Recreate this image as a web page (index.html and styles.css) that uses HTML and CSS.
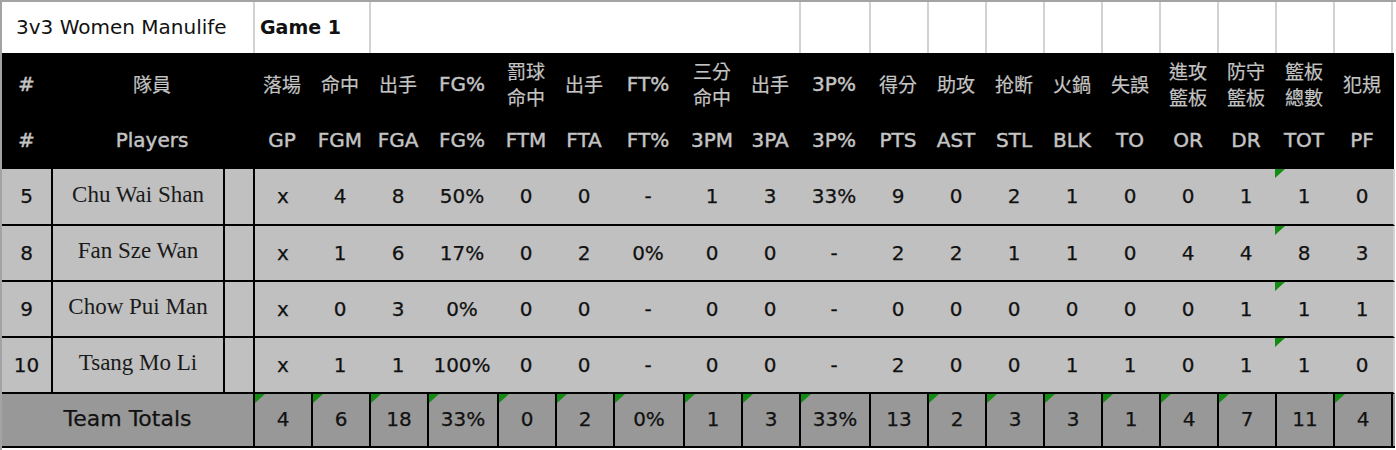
FILE: index.html
```html
<!DOCTYPE html>
<html lang="zh-Hant">
<head>
<meta charset="utf-8">
<title>3v3 Women Manulife</title>
<link rel="stylesheet" href="styles.css">
</head>
<body>
<div class="sheet">
  <div class="row title">
    <div class="cell t-name">3v3 Women Manulife</div>
    <div class="cell t-game">Game 1</div>
    <div class="cell t-blank"></div>
    <div class="cell t-col"></div>
    <div class="cell t-col"></div>
    <div class="cell t-col"></div>
    <div class="cell t-col"></div>
    <div class="cell t-col"></div>
    <div class="cell t-col"></div>
    <div class="cell t-col"></div>
    <div class="cell t-col"></div>
    <div class="cell t-col"></div>
    <div class="cell t-col t-last"></div>
  </div>

  <div class="row head head1">
    <div class="cell">#</div>
    <div class="cell span2 cjk">隊員</div>
    <div class="cell cjk">落場</div>
    <div class="cell cjk">命中</div>
    <div class="cell cjk">出手</div>
    <div class="cell">FG%</div>
    <div class="cell cjk">罰球<br>命中</div>
    <div class="cell cjk">出手</div>
    <div class="cell">FT%</div>
    <div class="cell cjk">三分<br>命中</div>
    <div class="cell cjk">出手</div>
    <div class="cell">3P%</div>
    <div class="cell cjk">得分</div>
    <div class="cell cjk">助攻</div>
    <div class="cell cjk">抢断</div>
    <div class="cell cjk">火鍋</div>
    <div class="cell cjk">失誤</div>
    <div class="cell cjk">進攻<br>籃板</div>
    <div class="cell cjk">防守<br>籃板</div>
    <div class="cell cjk">籃板<br>總數</div>
    <div class="cell cjk">犯規</div>
  </div>

  <div class="row head head2">
    <div class="cell">#</div>
    <div class="cell span2">Players</div>
    <div class="cell">GP</div>
    <div class="cell">FGM</div>
    <div class="cell">FGA</div>
    <div class="cell">FG%</div>
    <div class="cell">FTM</div>
    <div class="cell">FTA</div>
    <div class="cell">FT%</div>
    <div class="cell">3PM</div>
    <div class="cell">3PA</div>
    <div class="cell">3P%</div>
    <div class="cell">PTS</div>
    <div class="cell">AST</div>
    <div class="cell">STL</div>
    <div class="cell">BLK</div>
    <div class="cell">TO</div>
    <div class="cell">OR</div>
    <div class="cell">DR</div>
    <div class="cell">TOT</div>
    <div class="cell">PF</div>
  </div>

  <div class="row data first">
    <div class="cell">5</div>
    <div class="cell name">Chu Wai Shan</div>
    <div class="cell gap"></div>
    <div class="cell gp">x</div>
    <div class="cell">4</div><div class="cell">8</div><div class="cell">50%</div>
    <div class="cell">0</div><div class="cell">0</div><div class="cell">-</div>
    <div class="cell">1</div><div class="cell">3</div><div class="cell">33%</div>
    <div class="cell">9</div><div class="cell">0</div><div class="cell">2</div><div class="cell">1</div><div class="cell">0</div>
    <div class="cell">0</div><div class="cell">1</div><div class="cell flag">1</div><div class="cell">0</div>
  </div>

  <div class="row data">
    <div class="cell">8</div>
    <div class="cell name">Fan Sze Wan</div>
    <div class="cell gap"></div>
    <div class="cell gp">x</div>
    <div class="cell">1</div><div class="cell">6</div><div class="cell">17%</div>
    <div class="cell">0</div><div class="cell">2</div><div class="cell">0%</div>
    <div class="cell">0</div><div class="cell">0</div><div class="cell">-</div>
    <div class="cell">2</div><div class="cell">2</div><div class="cell">1</div><div class="cell">1</div><div class="cell">0</div>
    <div class="cell">4</div><div class="cell">4</div><div class="cell flag">8</div><div class="cell">3</div>
  </div>

  <div class="row data">
    <div class="cell">9</div>
    <div class="cell name">Chow Pui Man</div>
    <div class="cell gap"></div>
    <div class="cell gp">x</div>
    <div class="cell">0</div><div class="cell">3</div><div class="cell">0%</div>
    <div class="cell">0</div><div class="cell">0</div><div class="cell">-</div>
    <div class="cell">0</div><div class="cell">0</div><div class="cell">-</div>
    <div class="cell">0</div><div class="cell">0</div><div class="cell">0</div><div class="cell">0</div><div class="cell">0</div>
    <div class="cell">0</div><div class="cell">1</div><div class="cell flag">1</div><div class="cell">1</div>
  </div>

  <div class="row data">
    <div class="cell">10</div>
    <div class="cell name">Tsang Mo Li</div>
    <div class="cell gap"></div>
    <div class="cell gp">x</div>
    <div class="cell">1</div><div class="cell">1</div><div class="cell">100%</div>
    <div class="cell">0</div><div class="cell">0</div><div class="cell">-</div>
    <div class="cell">0</div><div class="cell">0</div><div class="cell">-</div>
    <div class="cell">2</div><div class="cell">0</div><div class="cell">0</div><div class="cell">1</div><div class="cell">1</div>
    <div class="cell">0</div><div class="cell">1</div><div class="cell flag">1</div><div class="cell">0</div>
  </div>

  <div class="row totals">
    <div class="cell team">Team Totals</div>
    <div class="cell flag">4</div>
    <div class="cell flag">6</div>
    <div class="cell flag">18</div>
    <div class="cell flag">33%</div>
    <div class="cell flag">0</div>
    <div class="cell flag">2</div>
    <div class="cell flag">0%</div>
    <div class="cell flag">1</div>
    <div class="cell flag">3</div>
    <div class="cell flag">33%</div>
    <div class="cell">13</div>
    <div class="cell flag">2</div>
    <div class="cell flag">3</div>
    <div class="cell flag">3</div>
    <div class="cell flag">1</div>
    <div class="cell flag">4</div>
    <div class="cell flag">7</div>
    <div class="cell">11</div>
    <div class="cell flag last">4</div>
  </div>
</div>
</body>
</html>
```

FILE: styles.css
```css
* {
  box-sizing: border-box;
}

html, body {
  margin: 0;
  padding: 0;
  background: #ffffff;
}

body {
  font-family: "DejaVu Sans", Verdana, sans-serif;
  font-size: 20px;
  color: #111111;
}

.sheet {
  width: 1396px;
  height: 450px;
  border-top: 2px solid #a3a3a3;
  border-left: 2px solid #a3a3a3;
  overflow: hidden;
}

.row {
  display: grid;
  grid-template-columns:
    49px 172px 30px
    58px 58px 58px 70px
    58px 58px 70px
    58px 58px 70px
    58px 58px 58px 58px 58px 58px 58px 58px 58px;
  width: 1391px;
}

.cell {
  display: flex;
  align-items: center;
  justify-content: center;
  text-align: center;
  white-space: nowrap;
  -webkit-text-stroke: 0.25px currentColor;
}

/* ---------- title row ---------- */
.title {
  height: 51px;
  background: #ffffff;
  width: 1393px;
}

.t-name {
  grid-column: span 3;
  justify-content: flex-start;
  padding-left: 14px;
  padding-bottom: 1px;
  font-size: 20px;
  -webkit-text-stroke: 0;
}

.t-game {
  grid-column: span 2;
  justify-content: flex-start;
  padding-left: 5px;
  padding-bottom: 1px;
  font-weight: bold;
  font-size: 19px;
  border-left: 2px solid #d2d2d2;
  -webkit-text-stroke: 0;
}

.t-blank {
  grid-column: span 7;
  border-left: 2px solid #d2d2d2;
}

.t-col {
  border-left: 2px solid #d2d2d2;
}

.t-last {
  border-right: 2px solid #d2d2d2;
  width: 60px;
}

/* ---------- header rows ---------- */
.head {
  background: #000000;
  color: #c4c4c4;
  height: 58px;
  width: 1392px;
}

.head .cell {
  -webkit-text-stroke: 0.45px currentColor;
}

.head .span2 {
  grid-column: span 2;
}

.head1 .cell {
  padding-top: 4px;
}

.head2 .cell {
  padding-top: 0;
}

.head .cjk {
  font-family: "Noto Sans CJK TC", "Noto Sans CJK SC", sans-serif;
  font-size: 19px;
  line-height: 26px;
  -webkit-text-stroke: 0.2px currentColor;
}

/* ---------- data rows ---------- */
.data {
  background: #c0c0c0;
  height: 56px;
  border-bottom: 2px solid #000000;
  width: 1393px;
  border-right: 2px solid #d2d2d2;
}

.data.first {
  height: 57px;
}

.data .cell {
  padding-bottom: 1px;
}

.data .name {
  border-left: 2px solid #000000;
  font-family: "Liberation Serif", "Times New Roman", serif;
  font-size: 23px;
  color: #1a1a1a;
  padding-bottom: 4px;
  -webkit-text-stroke: 0;
}

.data .gap {
  border-left: 2px solid #000000;
}

.data .gp {
  border-left: 2px solid #000000;
}

/* ---------- totals row ---------- */
.totals {
  background: #989898;
  height: 54px;
  border-bottom: 2px solid #000000;
  width: 1393px;
}

.totals .cell {
  border-left: 2px solid #000000;
  padding-bottom: 2px;
}

.totals .team {
  grid-column: span 3;
  border-left: none;
  font-size: 22px;
  padding-bottom: 4px;
}

.totals .last {
  border-right: 2px solid #000000;
  width: 60px;
}

/* ---------- comment marker ---------- */
.flag {
  position: relative;
}

.flag::before {
  content: "";
  position: absolute;
  top: 0;
  left: 0;
  width: 0;
  height: 0;
  border-top: 9px solid #138c13;
  border-right: 10px solid transparent;
}
```
